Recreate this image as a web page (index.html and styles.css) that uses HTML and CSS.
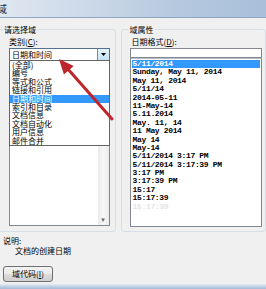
FILE: index.html
```html
<!DOCTYPE html>
<html lang="zh-CN">
<head>
    <meta charset="UTF-8">
    <title>域</title>
    <link rel="stylesheet" href="styles.css">
</head>
<body>
    <div class="titlebar"><span class="title">域</span></div>

    <div class="main">
        <fieldset class="group group-left">
            <legend>请选择域</legend>
            <div class="label">类别(<u>C</u>):</div>
            <div class="combo">
                <span class="combo-text">日期和时间</span>
                <span class="combo-btn">
                    <svg width="5" height="3" viewBox="0 0 5 3"><polygon points="0,0 5,0 2.5,3" fill="#000"/></svg>
                </span>
                <ul class="dropdown">
                    <li>(全部)</li>
                    <li>编号</li>
                    <li>等式和公式</li>
                    <li>链接和引用</li>
                    <li class="sel">日期和时间</li>
                    <li>索引和目录</li>
                    <li>文档信息</li>
                    <li>文档自动化</li>
                    <li>用户信息</li>
                    <li>邮件合并</li>
                </ul>
            </div>
            <div class="listbox">
                <div class="scrollbar"><span class="scroll-arrow">▾</span></div>
            </div>
        </fieldset>

        <fieldset class="group group-right">
            <legend>域属性</legend>
            <div class="label label-right">日期格式(<u>D</u>):</div>
            <div class="format-input"></div>
            <ul class="format-list">
                <li class="sel">5/11/2014</li>
                <li>Sunday, May 11, 2014</li>
                <li>May 11, 2014</li>
                <li>5/11/14</li>
                <li>2014-05-11</li>
                <li>11-May-14</li>
                <li>5.11.2014</li>
                <li>May. 11, 14</li>
                <li>11 May 2014</li>
                <li>May 14</li>
                <li>May-14</li>
                <li>5/11/2014 3:17 PM</li>
                <li>5/11/2014 3:17:39 PM</li>
                <li>3:17 PM</li>
                <li>3:17:39 PM</li>
                <li>15:17</li>
                <li>15:17:39</li>
                <li class="faded">15:17:39</li>
            </ul>
        </fieldset>
    </div>

    <div class="desc">
        <div>说明:</div>
        <div class="desc-text">文档的创建日期</div>
    </div>
    <button class="code-btn">域代码(<u>I</u>)</button>
    <div class="window-edge"></div>

    <!-- 红色标注箭头 -->
    <svg class="arrow" width="266" height="289" viewBox="0 0 266 289">
        <line x1="112" y1="119" x2="67" y2="68" stroke="#bd262b" stroke-width="3" stroke-linecap="round"/>
        <polygon points="59,59 73.7,66 63.9,74.6" fill="#bd262b"/>
    </svg>
</body>
</html>
```

FILE: styles.css
```css
* {
    margin: 0;
    padding: 0;
    box-sizing: border-box;
}

body {
    width: 266px;
    height: 289px;
    overflow: hidden;
    position: relative;
    background: #f0f0f0;
    color: #000;
    font-family: "Noto Sans CJK SC", sans-serif;
    font-size: 8px;
}

.titlebar {
    height: 18px;
    border-bottom: 1px solid #8fa6c2;
    background: linear-gradient(to right, #dfe7f0 0%, #cbd8e8 35%, #b6c9df 65%, #a9bfda 100%);
}

.title {
    display: block;
    margin-left: -3px;
    padding-top: 4px;
    font-size: 10px;
    line-height: 10px;
    color: #1e2a3a;
}

.main {
    display: flex;
    gap: 5px;
    margin-top: 7px;
    margin-left: -6px;
}

.group {
    border: 1px solid #d5dfe5;
    border-radius: 3px;
    min-width: 0;
}

.group legend {
    padding: 0 1px;
    font-size: 8px;
    line-height: 9px;
}

.group-left {
    width: 125px;
    padding: 0 5px 5px 14px;
}

.group-left legend {
    margin-left: -6px;
}

.group-right {
    width: 150px;
    padding: 0 0 4px 8px;
}

.group-right legend {
    margin-left: -1px;
}

.label {
    margin-top: 3px;
    line-height: 10px;
}

.label-right {
    margin-left: 2px;
}

/* 类别下拉框 */
.combo {
    position: relative;
    display: flex;
    align-items: center;
    height: 13px;
    margin-top: 1px;
    border: 1px solid #56708f;
    background: #fff;
}

.combo-text {
    padding-left: 2px;
    line-height: 10px;
}

.combo-btn {
    display: flex;
    align-items: center;
    justify-content: center;
    width: 12px;
    height: 100%;
    margin-left: auto;
    border-left: 1px solid #6a8fb6;
    background: linear-gradient(#e9f5fd, #c3e1f5);
}

.dropdown {
    position: absolute;
    top: 100%;
    left: -1px;
    width: calc(100% + 2px);
    border: 1px solid #646464;
    background: #fff;
    list-style: none;
    z-index: 2;
}

.dropdown li {
    height: 8.4px;
    line-height: 8.4px;
    padding-left: 2px;
    white-space: nowrap;
}

.dropdown .sel,
.format-list .sel {
    background: #3399ff;
    color: #fff;
}

.listbox {
    display: flex;
    justify-content: flex-end;
    height: 165px;
    border: 1px solid #828790;
    background: #fff;
}

.scrollbar {
    display: flex;
    flex-direction: column;
    justify-content: flex-end;
    align-items: center;
    width: 11px;
    background: linear-gradient(to right, #ebebeb, #f7f7f7 50%, #ebebeb);
}

.scroll-arrow {
    font-family: "DejaVu Sans", sans-serif;
    font-size: 7px;
    line-height: 10px;
    color: #6b6b6b;
}

/* 日期格式 */
.format-input {
    width: 132px;
    height: 10px;
    margin-top: 1px;
    border: 1px solid #828790;
    background: #fff;
}

.format-list {
    width: 132px;
    height: 169px;
    padding: 1px;
    border: 1px solid #828790;
    border-top-color: #b8bcc4;
    background: #fff;
    list-style: none;
    font-family: "Liberation Mono", monospace;
    font-size: 8px;
    font-weight: bold;
    letter-spacing: -0.35px;
    overflow: hidden;
}

.format-list li {
    height: 8.4px;
    line-height: 8.4px;
    padding-left: 1px;
    white-space: nowrap;
}

.format-list .faded {
    color: #e4e4e4;
}

.desc {
    margin-top: 4px;
    padding-left: 3px;
    line-height: 10px;
}

.desc-text {
    padding-left: 12px;
}

.code-btn {
    display: block;
    width: 50px;
    height: 16px;
    margin: 10px 0 0 3px;
    border: 1px solid #707070;
    border-radius: 3px;
    background: linear-gradient(#f2f2f2 0%, #ebebeb 50%, #dddddd 50%, #cfcfcf 100%);
    font-family: "Noto Sans CJK SC", sans-serif;
    font-size: 8px;
    line-height: 12px;
    color: #000;
}

.window-edge {
    height: 5px;
    margin-top: 2px;
    background: linear-gradient(#e3eaf3, #c9d8ea 40%, #a3b9d6);
}

/* 箭头盖在下拉列表上面 */
.arrow {
    position: absolute;
    top: 0;
    left: 0;
    z-index: 3;
    pointer-events: none;
}
```
